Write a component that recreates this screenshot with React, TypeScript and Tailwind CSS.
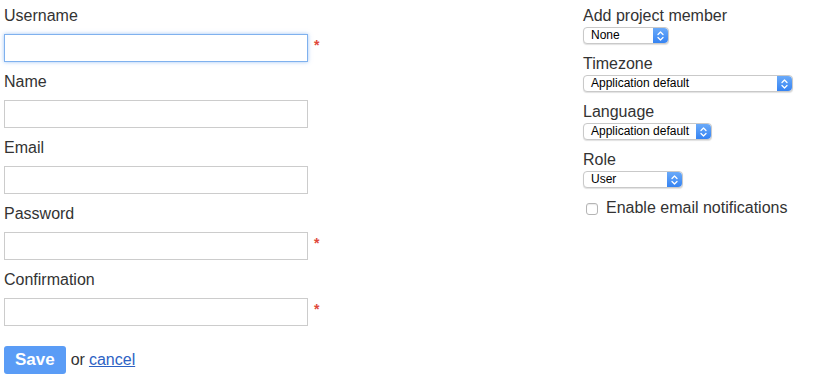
import type { ReactNode } from "react";

const fields = [
  { label: "Username", required: true, focused: true },
  { label: "Name", required: false },
  { label: "Email", required: false },
  { label: "Password", required: true },
  { label: "Confirmation", required: true },
];

const Stepper = () => (
  <span className="flex h-full w-[15px] shrink-0 items-center justify-center rounded-r-[4px] bg-gradient-to-b from-[#6aaaf9] to-[#3583f2]">
    <svg width="7" height="10" viewBox="0 0 7 10" fill="none" stroke="white" strokeWidth="1.3" strokeLinecap="round" strokeLinejoin="round">
      <path d="M1 3.5 L3.5 1 L6 3.5" />
      <path d="M1 6.5 L3.5 9 L6 6.5" />
    </svg>
  </span>
);

const MacSelect = ({ value, width }: { value: string; width: string }) => (
  <div
    className={`mt-[1px] mb-[10px] flex h-[17px] items-center rounded-[4px] border border-[#c9c9c9] bg-white shadow-[0_1px_1px_rgba(0,0,0,0.12)] ${width}`}
  >
    <span className="flex-1 pl-[7px] text-[12px] leading-[15px] text-black">{value}</span>
    <Stepper />
  </div>
);

const SideField = ({ label, children }: { label: string; children: ReactNode }) => (
  <div>
    <div className="h-5 text-[16px] leading-5 text-[#333]">{label}</div>
    {children}
  </div>
);

export default function App() {
  return (
    <div className="flex min-h-[382px] w-[815px] bg-white pt-[6px] font-['Liberation_Sans',Arial,sans-serif] text-[#333]">
      <div className="w-[579px] pl-[4px]">
        {fields.map((f) => (
          <div key={f.label}>
            <div className="mb-2 h-5 text-[16px] leading-5">{f.label}</div>
            <div className="mb-[10px] flex items-center">
              <input
                type={f.label === "Password" || f.label === "Confirmation" ? "password" : "text"}
                className={`h-7 w-[304px] border bg-white px-2 text-[14px] outline-none ${
                  f.focused
                    ? "border-[#7fb1ee] shadow-[0_0_4px_rgba(82,150,236,0.55)]"
                    : "border-[#cccccc]"
                }`}
              />
              {f.required && (
                <span className="relative top-[-3px] ml-[6px] text-[14px] font-bold leading-none text-[#e0483a]">*</span>
              )}
            </div>
          </div>
        ))}
        <div className="mt-[20px] flex items-center">
          <button className="h-7 rounded-[3px] bg-[#5a9cf6] px-[11px] text-[17px] font-bold leading-7 text-white">
            Save
          </button>
          <span className="ml-[5px] text-[16px]">or</span>
          <a href="#" className="ml-[4px] text-[16px] text-[#2d62c4] underline">
            cancel
          </a>
        </div>
      </div>
      <div className="pl-[4px]">
        <SideField label="Add project member">
          <MacSelect value="None" width="w-[86px]" />
        </SideField>
        <SideField label="Timezone">
          <MacSelect value="Application default" width="w-[210px]" />
        </SideField>
        <SideField label="Language">
          <MacSelect value="Application default" width="w-[129px]" />
        </SideField>
        <SideField label="Role">
          <MacSelect value="User" width="w-[100px]" />
        </SideField>
        <label className="flex h-5 items-center text-[16px] leading-5">
          <input
            type="checkbox"
            className="mt-[2px] ml-[3px] h-[12px] w-[12px] appearance-none rounded-[3px] border border-[#b5b5b5] bg-white shadow-[inset_0_1px_1px_rgba(0,0,0,0.08)]"
          />
          <span className="ml-[8px]">Enable email notifications</span>
        </label>
      </div>
    </div>
  );
}
